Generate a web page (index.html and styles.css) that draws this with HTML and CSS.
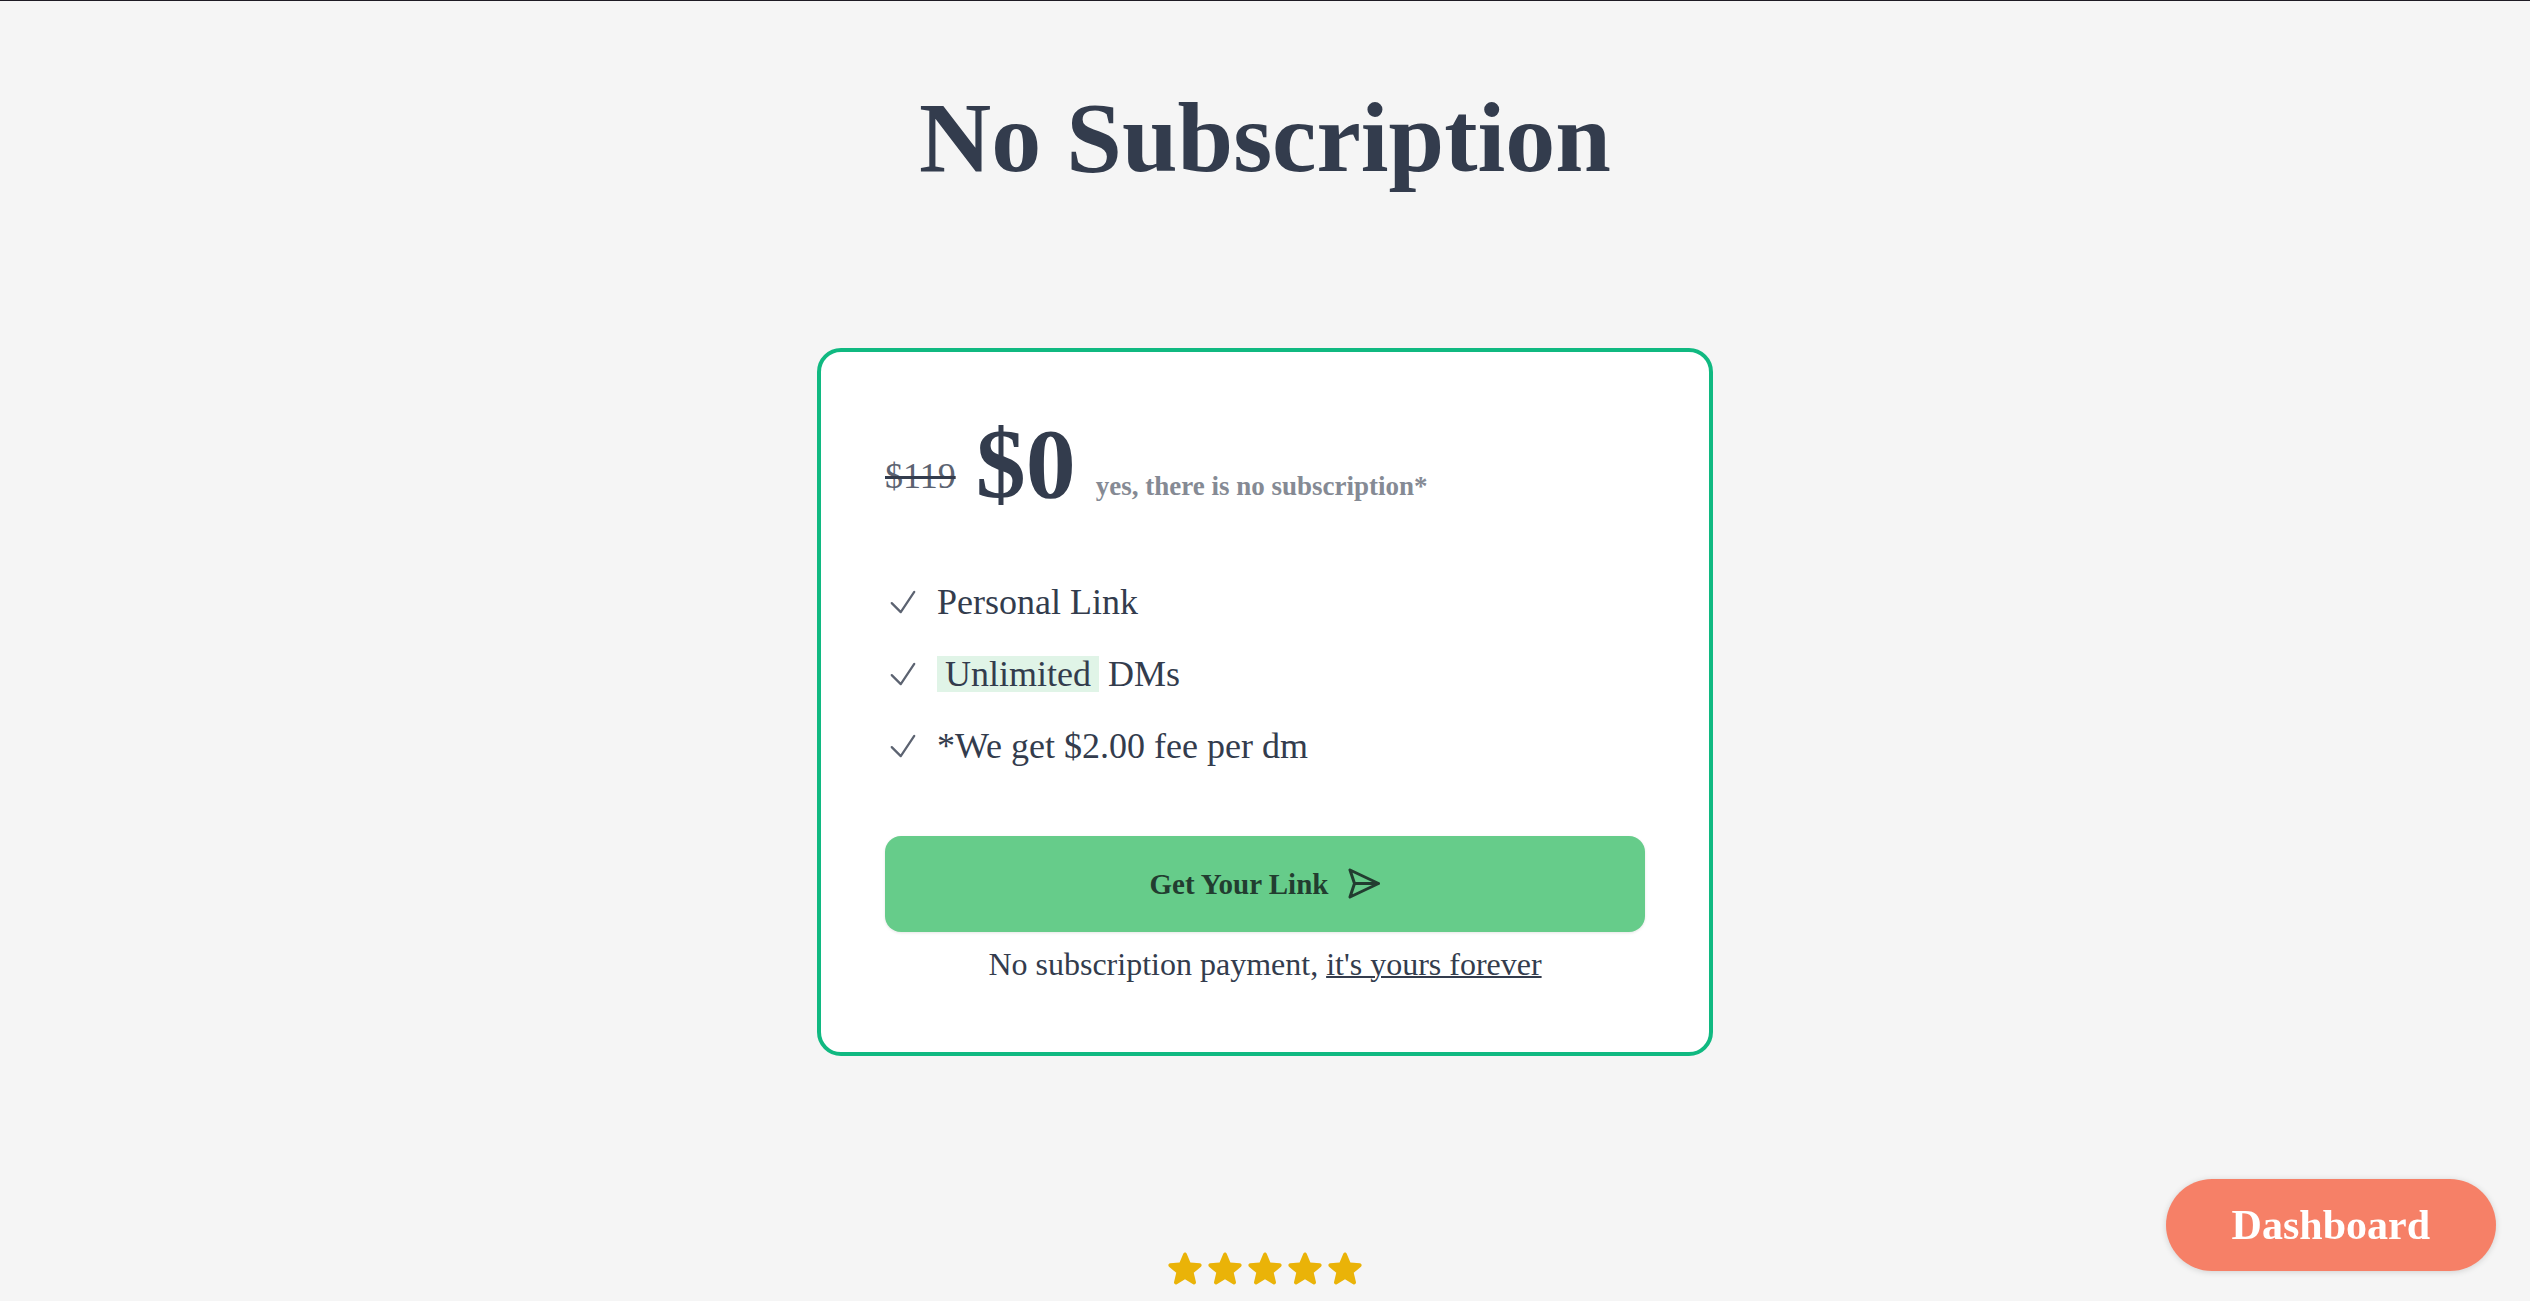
FILE: index.html
```html
<!DOCTYPE html>
<html lang="en">
<head>
<meta charset="UTF-8">
<meta name="viewport" content="width=device-width, initial-scale=1.0">
<title>No Subscription</title>
<link rel="stylesheet" href="styles.css">
</head>
<body>

<svg class="sprite" aria-hidden="true">
    <symbol id="check" viewBox="0 0 24 24">
        <path d="M4.5 12.75l6 6 9-13.5" fill="none" stroke="currentColor" stroke-width="1.5" stroke-linecap="round" stroke-linejoin="round"/>
    </symbol>
    <symbol id="star" viewBox="0 0 20 20">
        <path fill="currentColor" fill-rule="evenodd" d="M10.868 2.884c-.321-.772-1.415-.772-1.736 0l-1.83 4.401-4.753.381c-.833.067-1.171 1.107-.536 1.651l3.62 3.102-1.106 4.637c-.194.813.691 1.456 1.405 1.02L10 15.591l4.069 2.485c.713.436 1.598-.207 1.404-1.02l-1.106-4.637 3.62-3.102c.635-.544.297-1.584-.536-1.65l-4.752-.382-1.831-4.401z"/>
    </symbol>
</svg>

<section class="pricing">
    <h1>No Subscription</h1>

    <div class="card">
        <div class="price">
            <s class="old-price">$119</s>
            <span class="new-price">$0</span>
            <span class="price-note">yes, there is no subscription*</span>
        </div>

        <ul class="features">
            <li><svg class="icon"><use href="#check"/></svg><span>Personal Link</span></li>
            <li><svg class="icon"><use href="#check"/></svg><span><span class="highlight">Unlimited</span> DMs</span></li>
            <li><svg class="icon"><use href="#check"/></svg><span>*We get $2.00 fee per dm</span></li>
        </ul>

        <button type="button" class="btn">
            Get Your Link
            <svg class="icon" viewBox="0 0 36 36" fill="none" stroke="currentColor" stroke-width="3" stroke-linecap="round" stroke-linejoin="round">
                <path d="M6 4L34.5 17.5L6 31L10.5 17.5ZM10.5 17.5H34"/>
            </svg>
        </button>
        <p class="note">No subscription payment, <span class="underline">it's yours forever</span></p>
    </div>

    <div class="stars" role="img" aria-label="5 stars">
        <svg><use href="#star"/></svg>
        <svg><use href="#star"/></svg>
        <svg><use href="#star"/></svg>
        <svg><use href="#star"/></svg>
        <svg><use href="#star"/></svg>
    </div>
</section>

<a href="#" class="dashboard">Dashboard</a>

</body>
</html>
```

FILE: styles.css
```css
* {
    box-sizing: border-box;
}
body {
    margin: 0;
    border-top: 1px solid #1e1b24;
    background-color: #f5f5f5;
    color: #333c4d;
    font-family: "Liberation Serif", serif;
}
.sprite {
    display: none;
}
.pricing {
    display: flex;
    flex-direction: column;
    align-items: center;
    padding: 87px 32px 8px;
}
h1 {
    margin: 0 0 160px;
    font-size: 100px;
    line-height: 100px;
    text-align: center;
}
.card {
    width: 100%;
    max-width: 896px;
    padding: 64px;
    border: 4px solid #10b981;
    border-radius: 24px;
    background-color: #fff;
}
.price {
    display: flex;
    align-items: flex-end;
    gap: 20px;
}
.old-price {
    margin-bottom: 16px;
    font-size: 36px;
    line-height: 40px;
    color: #5c6371;
    text-decoration: line-through 3px #333c4d;
}
.new-price {
    font-size: 100px;
    font-weight: bold;
    line-height: 96px;
}
.price-note {
    margin-bottom: 8px;
    font-size: 27px;
    font-weight: bold;
    line-height: 36px;
    color: #858a94;
}
.features {
    display: flex;
    flex-direction: column;
    gap: 36px;
    margin: 72px 0;
    padding: 0;
    list-style: none;
    font-size: 36px;
    line-height: 36px;
}
.features li {
    display: flex;
    align-items: center;
    gap: 16px;
}
.icon {
    flex-shrink: 0;
    width: 36px;
    height: 36px;
}
.features .icon {
    color: #5c6371;
}
.highlight {
    display: inline-block;
    padding: 0 8px;
    background-color: #e0f4e7;
}
.btn {
    display: flex;
    align-items: center;
    justify-content: center;
    gap: 16px;
    width: 100%;
    height: 96px;
    border: none;
    border-radius: 16px;
    background-color: #66cc8a;
    box-shadow: 0 1px 3px rgba(0, 0, 0, 0.1);
    color: #223d30;
    font-family: inherit;
    font-size: 29px;
    font-weight: bold;
    cursor: pointer;
}
.note {
    margin: 8px 0 0;
    font-size: 32px;
    line-height: 48px;
    text-align: center;
}
.underline {
    text-decoration: underline 2px;
}
.stars {
    display: flex;
    margin-top: 192px;
    color: #eab308;
}
.stars svg {
    width: 40px;
    height: 40px;
}
.dashboard {
    position: fixed;
    right: 34px;
    bottom: 30px;
    padding: 22px 66px;
    border-radius: 46px;
    background-color: #f68067;
    box-shadow: 0 1px 6px rgba(0, 0, 0, 0.15);
    color: #fff;
    font-size: 42px;
    font-weight: bold;
    line-height: 48px;
    text-decoration: none;
}
```
